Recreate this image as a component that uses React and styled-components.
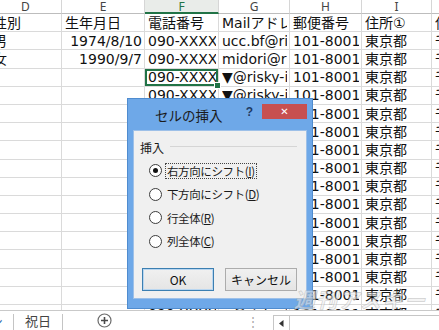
import React from "react";
import styled, { createGlobalStyle, css } from "styled-components";

const GlobalStyle = createGlobalStyle`
  html, body {
    margin: 0;
    padding: 0;
    background: #ffffff;
    overflow: hidden;
  }
  body {
    font-family: "Noto Sans CJK JP", "Noto Sans", sans-serif;
  }
`;

const cols = ["D", "E", "F", "G", "H", "I", "J"];

const filler = ["", "", "090-XXXX-XXXX", "▼@risky-info.jp", "101-8001", "東京都", "千代田区"];

const rows = [
  ["性別", "生年月日", "電話番号", "Mailアドレス", "郵便番号", "住所①", "住所②"],
  ["男", "1974/8/10", "090-XXXX-XXXX", "ucc.bf@risky-info.jp", "101-8001", "東京都", "千代田区"],
  ["女", "1990/9/7", "090-XXXX-XXXX", "midori@risky-info.jp", "101-8001", "東京都", "千代田区"],
  ...Array.from({ length: 14 }, () => filler),
];

export default function App() {
  return (
    <Screen>
      <GlobalStyle />
      <SheetArea>
        <Grid>
          {cols.map((c) => (
            <HeadCell key={c} $selected={c === "F"}>
              {c}
            </HeadCell>
          ))}
          {rows.map((r, ri) =>
            r.map((v, ci) => (
              <Cell
                key={ri + "-" + ci}
                $right={ci === 1 && ri > 0}
                $active={ri === 3 && ci === 2}
              >
                <CellText>{v}</CellText>
              </Cell>
            ))
          )}
        </Grid>
      </SheetArea>

      <TabBar>
        <TabStub>シ</TabStub>
        <TabSep />
        <Tab>祝日</Tab>
        <TabSep />
        <AddSheet>
          <svg width="15" height="15" viewBox="0 0 15 15">
            <circle cx="7.5" cy="7.5" r="6.5" fill="none" stroke="#6b6b6b" strokeWidth="1.2" />
            <path d="M7.5 4v7M4 7.5h7" stroke="#4a4a4a" strokeWidth="1.6" />
          </svg>
        </AddSheet>
        <Grip>⋮</Grip>
        <HScroll>
          <ArrowBtn>
            <svg width="5" height="7" viewBox="0 0 5 7">
              <path d="M4.5 0v7L0 3.5z" fill="#333" />
            </svg>
          </ArrowBtn>
        </HScroll>
      </TabBar>

      <Dialog>
        <TitleBar>
          <Title>セルの挿入</Title>
          <HelpBtn>?</HelpBtn>
          <CloseBtn>✕</CloseBtn>
        </TitleBar>
        <Client>
          <GroupHead>
            <GroupLabel>挿入</GroupLabel>
            <GroupLine />
          </GroupHead>
          <Options>
            <Option>
              <Radio $checked />
              <OptionText $focused>右方向にシフト(<Key>I</Key>)</OptionText>
            </Option>
            <Option>
              <Radio />
              <OptionText>下方向にシフト(<Key>D</Key>)</OptionText>
            </Option>
            <Option>
              <Radio />
              <OptionText>行全体(<Key>R</Key>)</OptionText>
            </Option>
            <Option>
              <Radio />
              <OptionText>列全体(<Key>C</Key>)</OptionText>
            </Option>
          </Options>
          <Buttons>
            <Button $default>OK</Button>
            <Button>キャンセル</Button>
          </Buttons>
        </Client>
      </Dialog>

      <Watermark>週刊アスキー</Watermark>
    </Screen>
  );
}

const Screen = styled.div`
  position: relative;
  width: 439px;
  height: 330px;
  display: flex;
  flex-direction: column;
  overflow: hidden;
  background: #ffffff;
`;

const SheetArea = styled.div`
  height: 310px;
  overflow: hidden;
`;

const Grid = styled.div`
  display: grid;
  grid-template-columns: 72px 83px 74px 71px 72px 70px 60px;
  grid-template-rows: 14px;
  grid-auto-rows: 18.2px;
  margin-left: -10px;
`;

const HeadCell = styled.div`
  display: flex;
  align-items: center;
  justify-content: center;
  font-family: "Noto Sans", sans-serif;
  font-size: 12px;
  color: #444444;
  background: #ffffff;
  border-right: 1px solid #d6d6d6;
  border-bottom: 1px solid #bdbdbd;
  box-sizing: border-box;
  ${(p) =>
    p.$selected &&
    css`
      background: #e9ece9;
      color: #217346;
      border-bottom: 2px solid #217346;
    `}
`;

const Cell = styled.div`
  position: relative;
  box-sizing: border-box;
  display: flex;
  align-items: center;
  justify-content: ${(p) => (p.$right ? "flex-end" : "flex-start")};
  padding: 0 2px 0 3px;
  min-width: 0;
  border-right: 1px solid #dadada;
  border-bottom: 1px solid #dadada;
  ${(p) =>
    p.$active &&
    css`
      box-shadow: inset 0 0 0 2px #217346;
      z-index: 1;
      &::after {
        content: "";
        position: absolute;
        right: -3px;
        bottom: -3px;
        width: 5px;
        height: 5px;
        background: #217346;
        border: 1px solid #ffffff;
      }
    `}
`;

const CellText = styled.span`
  font-family: "DejaVu Sans", "Noto Sans CJK JP", sans-serif;
  font-size: 14px;
  line-height: 1;
  color: #111111;
  white-space: nowrap;
  overflow: hidden;
`;

const TabBar = styled.div`
  flex: 1;
  display: flex;
  align-items: stretch;
  border-top: 1px solid #c9c9c9;
  background: #ffffff;
  font-size: 13px;
  color: #444444;
`;

const TabStub = styled.div`
  width: 22px;
  margin-left: -9px;
  display: flex;
  align-items: center;
  justify-content: flex-end;
  padding-right: 10px;
  box-sizing: border-box;
  color: #3b6fb0;
  overflow: hidden;
`;

const TabSep = styled.div`
  width: 1px;
  margin: 3px 0 0;
  background: #c4c4c4;
`;

const Tab = styled.div`
  width: 48px;
  display: flex;
  align-items: center;
  justify-content: center;
`;

const AddSheet = styled.div`
  width: 82px;
  display: flex;
  align-items: center;
  justify-content: center;
`;

const Grip = styled.div`
  width: 128px;
  display: flex;
  align-items: center;
  justify-content: flex-end;
  padding-right: 14px;
  box-sizing: border-box;
  color: #a6a6a6;
  font-size: 12px;
`;

const HScroll = styled.div`
  flex: 1;
  margin-top: 4px;
  border-top: 1px solid #c6c6c6;
  border-left: 1px solid #c6c6c6;
  display: flex;
  background: #ffffff;
`;

const ArrowBtn = styled.div`
  width: 15px;
  display: flex;
  align-items: center;
  justify-content: center;
  border-right: 1px solid #c6c6c6;
`;

const Dialog = styled.div`
  position: absolute;
  left: 127px;
  top: 98px;
  width: 186px;
  height: 211px;
  box-sizing: border-box;
  background: #6ea8e8;
  border: 1px solid #4f8ccf;
  display: flex;
  flex-direction: column;
  padding: 0 5px 9px;
  z-index: 5;
`;

const TitleBar = styled.div`
  height: 31px;
  display: flex;
  align-items: flex-start;
`;

const Title = styled.div`
  margin: 8px 0 0 22px;
  font-size: 13.5px;
  line-height: 17px;
  color: #1b1b1b;
`;

const HelpBtn = styled.div`
  margin: 6px 0 0 20px;
  width: 14px;
  text-align: center;
  font-family: "Liberation Sans", sans-serif;
  font-weight: bold;
  font-size: 12px;
  color: #1f3a63;
`;

const CloseBtn = styled.div`
  margin: 5px 0 0 auto;
  width: 45px;
  height: 15px;
  background: #c75050;
  color: #ffffff;
  font-family: "DejaVu Sans", sans-serif;
  font-size: 10px;
  font-weight: bold;
  display: flex;
  align-items: center;
  justify-content: center;
`;

const Client = styled.div`
  flex: 1;
  background: #f0f0f0;
  border: 1px solid #9dc0e8;
  display: flex;
  flex-direction: column;
  padding: 8px 9px 0 6px;
  font-size: 12px;
  color: #1a1a1a;
`;

const GroupHead = styled.div`
  display: flex;
  align-items: center;
  gap: 6px;
  height: 18px;
`;

const GroupLabel = styled.div`
  line-height: 1;
`;

const GroupLine = styled.div`
  flex: 1;
  height: 1px;
  margin-top: -4px;
  background: #d5d5d5;
`;

const Options = styled.div`
  display: flex;
  flex-direction: column;
  gap: 8px;
  padding: 6px 0 0 9px;
`;

const Option = styled.div`
  display: flex;
  align-items: center;
  gap: 5px;
  height: 15.5px;
  white-space: nowrap;
`;

const Radio = styled.span`
  position: relative;
  width: 11px;
  height: 11px;
  border-radius: 50%;
  border: 1px solid #3c3c3c;
  background: #ffffff;
  flex: none;
  ${(p) =>
    p.$checked &&
    css`
      &::after {
        content: "";
        position: absolute;
        left: 3px;
        top: 3px;
        width: 5px;
        height: 5px;
        border-radius: 50%;
        background: #111111;
      }
    `}
`;

const OptionText = styled.span`
  padding: 0 1px;
  font-size: 11.5px;
  letter-spacing: -0.4px;
  line-height: 14px;
  border: 1px dotted ${(p) => (p.$focused ? "#444444" : "transparent")};
  margin-left: -2px;
`;

const Key = styled.span`
  text-decoration: underline;
`;

const Buttons = styled.div`
  display: flex;
  gap: 11px;
  margin-top: auto;
  margin-bottom: 7px;
  padding-left: 2px;
`;

const Button = styled.div`
  width: 73px;
  height: 23px;
  box-sizing: border-box;
  display: flex;
  align-items: center;
  justify-content: center;
  font-size: 12px;
  color: #111111;
  background: linear-gradient(#f0f0f0, #e5e5e5);
  border: 1px solid ${(p) => (p.$default ? "#3c7fb1" : "#acacac")};
  ${(p) => p.$default && css`box-shadow: inset 0 0 0 1px #b9d6f0;`}
`;

const Watermark = styled.div`
  position: absolute;
  left: 294px;
  top: 284px;
  font-size: 21px;
  font-weight: bold;
  font-style: italic;
  letter-spacing: 1px;
  color: rgba(235, 235, 235, 0.55);
  -webkit-text-stroke: 0.7px rgba(160, 160, 160, 0.45);
  z-index: 6;
  pointer-events: none;
`;
